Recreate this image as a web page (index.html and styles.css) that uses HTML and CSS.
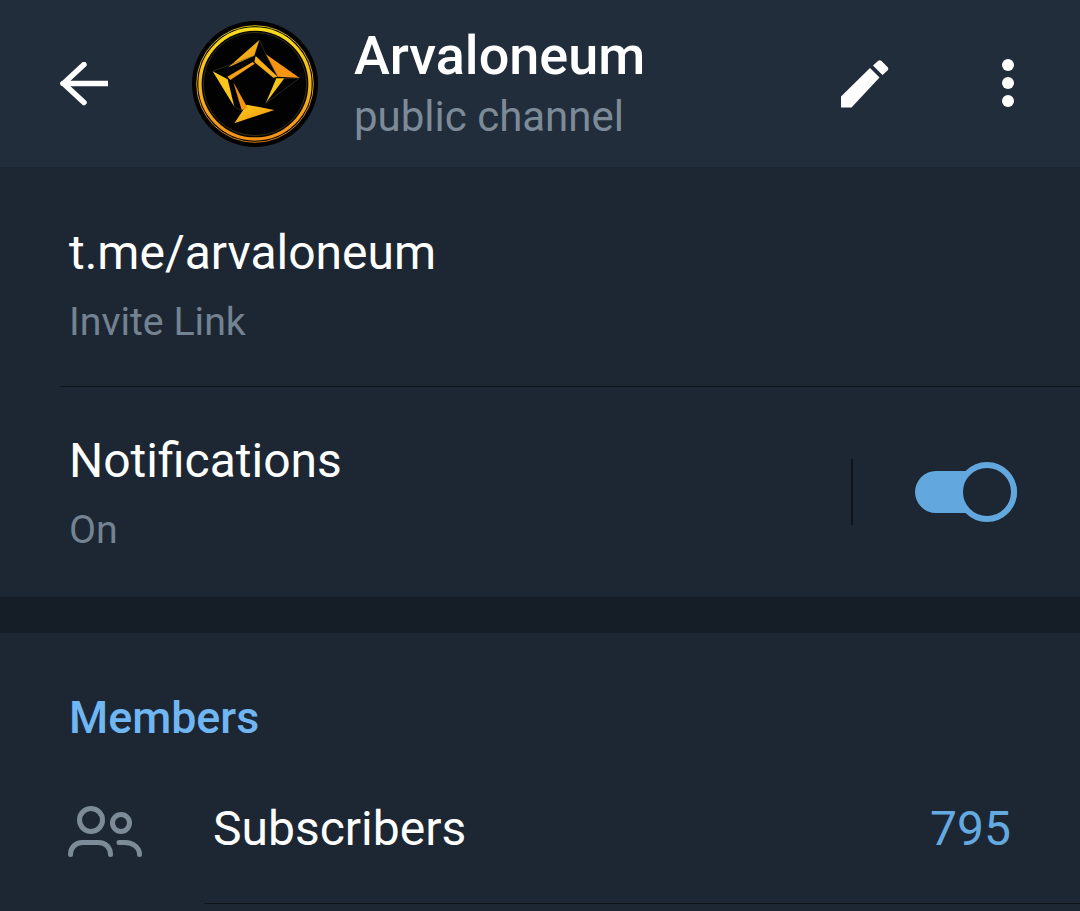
FILE: index.html
```html
<!DOCTYPE html>
<html lang="en">
<head>
    <meta charset="UTF-8">
    <title>Arvaloneum</title>
    <link rel="stylesheet" href="styles.css">
</head>
<body>
    <!-- Header -->
    <header class="header">
        <svg class="back-icon" viewBox="0 0 48 44" width="48" height="44">
            <path d="M3 21.500H47M24 2.500L3.500 21.500 24 40.500" fill="none" stroke="#fff" stroke-width="5.500" stroke-linecap="round"/>
        </svg>
        <svg class="logo" viewBox="-39 -39 378 378" width="126" height="126">
            <defs>
                <linearGradient id="ring" x1="0" y1="0" x2="0" y2="1">
                    <stop offset="0" stop-color="#f8dc1e"/>
                    <stop offset="1" stop-color="#f39016"/>
                </linearGradient>
                <linearGradient id="shard" x1="0" y1="0" x2="1" y2="1">
                    <stop offset="0" stop-color="#fbd01a"/>
                    <stop offset="1" stop-color="#f28d12"/>
                </linearGradient>
            </defs>
            <circle cx="150" cy="150" r="189" fill="#020202"/>
            <circle cx="150" cy="150" r="165" fill="none" stroke="url(#ring)" stroke-width="10"/>
            <circle cx="150" cy="150" r="175" fill="none" stroke="url(#ring)" stroke-width="2.500"/>
            <circle cx="150" cy="150" r="155" fill="none" stroke="#6b5a20" stroke-width="1.500"/>
            <path d="M163 18L148 65L70 100Z" fill="url(#shard)"/>
            <path d="M143 84L67 128L76 138L149 89Z" fill="#f6a014"/>
            <path d="M152 66L218 128L205 131L148 84Z" fill="#f7b016"/>
            <path d="M182 60L284 132L218 128Z" fill="#f59412"/>
            <path d="M214 133L238 133L182 208Z" fill="#f9c418"/>
            <path d="M125 212L208 228L88 268Z" fill="url(#shard)"/>
            <path d="M23 112L68 136L88 218Z" fill="#fac61a"/>
            <path d="M85 145L128 222L110 228Z" fill="#f29412"/>
            <path d="M163 18L182 60L218 128M23 112L148 65M238 133L284 132L182 208M88 218L110 230" fill="none" stroke="#4a4a3a" stroke-width="1.500"/>
        </svg>
        <div class="header-text">
            <div class="title">Arvaloneum</div>
            <div class="subtitle">public channel</div>
        </div>
        <svg class="edit-icon" viewBox="0 0 48 48" width="48" height="48">
            <path d="M0 47.500V36.500L29 8l9.500 9.500L10.500 47.500Z" fill="#fff"/>
            <path d="M32 5.500L37 1c1-1 2.500-1 3.500 0L46.500 7c1 1 1 2.500 0 3.500L41.500 15Z" fill="#fff"/>
        </svg>
        <div class="dots">
            <span></span><span></span><span></span>
        </div>
    </header>

    <!-- Info -->
    <section class="info">
        <div class="row-link">
            <div class="primary">t.me/arvaloneum</div>
            <div class="secondary">Invite Link</div>
        </div>
        <div class="row-notify">
            <div class="notify-text">
                <div class="primary">Notifications</div>
                <div class="secondary">On</div>
            </div>
            <div class="vline"></div>
            <div class="switch"><div class="knob"></div></div>
        </div>
    </section>

    <div class="gap"></div>

    <!-- Members -->
    <section class="members">
        <h2 class="section-title">Members</h2>
        <div class="member-row">
            <svg class="people-icon" viewBox="0 0 74 52" width="74" height="52">
                <g fill="none" stroke="#7d8b99" stroke-width="5" stroke-linecap="round">
                    <circle cx="23" cy="15" r="11.500"/>
                    <circle cx="53" cy="18" r="8.500"/>
                    <path d="M2.500 49.500c0-7 5-12 12-12h16c7 0 12 5 12 12"/>
                    <path d="M51 37.500h6c8 0 14.500 5 14.500 12"/>
                </g>
            </svg>
            <div class="member-body">
                <span class="member-label">Subscribers</span>
                <span class="member-count">795</span>
            </div>
        </div>
    </section>
</body>
</html>
```

FILE: styles.css
```css
body {
    margin: 0;
    height: 911px;
    overflow: hidden;
    background-color: #1d2733;
    font-family: Roboto, "Liberation Sans", sans-serif;
    color: #fff;
}

.header {
    display: flex;
    align-items: center;
    height: 167px;
    box-sizing: border-box;
    background-color: #212d3b;
}

.back-icon {
    margin-left: 60px;
    flex-shrink: 0;
}

.logo {
    margin-left: 84px;
    flex-shrink: 0;
}

.header-text {
    margin-left: 36px;
    flex-grow: 1;
}

.title {
    font-size: 54px;
    font-weight: 500;
    line-height: 58px;
    margin-top: 1px;
}

.subtitle {
    font-size: 42px;
    line-height: 48px;
    margin-top: 8px;
    color: #7d8b99;
}

.edit-icon {
    flex-shrink: 0;
    margin-top: 1px;
}

.dots {
    display: flex;
    flex-direction: column;
    gap: 6px;
    margin-top: -2px;
    margin-left: 113px;
    margin-right: 66px;
}

.dots span {
    width: 12px;
    height: 12px;
    border-radius: 50%;
    background-color: #fff;
}

.info {
    height: 430px;
}

.row-link {
    height: 220px;
    box-sizing: border-box;
    padding: 57px 0 0 69px;
    position: relative;
}

.row-link::after {
    content: "";
    position: absolute;
    left: 60px;
    right: 0;
    bottom: 0;
    height: 1px;
    background-color: #0f141a;
}

.primary {
    font-size: 48px;
    line-height: 58px;
}

.secondary {
    font-size: 39.300px;
    line-height: 44px;
    margin-top: 18px;
    color: #748391;
}

.row-notify {
    display: flex;
    align-items: center;
    height: 210px;
    box-sizing: border-box;
    padding-left: 69px;
}

.notify-text {
    flex-grow: 1;
}

.vline {
    width: 2px;
    height: 66px;
    background-color: #0f141a;
}

.switch {
    position: relative;
    width: 102px;
    height: 42px;
    margin: 0 63px 0 62px;
    border-radius: 21px;
    background-color: #62a8de;
}

.knob {
    position: absolute;
    right: 0;
    top: -9px;
    width: 48px;
    height: 48px;
    border: 6px solid #62a8de;
    border-radius: 50%;
    background-color: #1d2733;
}

.gap {
    height: 36px;
    background-color: #151d26;
}

.members {
    height: 278px;
}

.section-title {
    margin: 0;
    padding: 60px 0 0 69px;
    font-size: 44.800px;
    font-weight: 500;
    line-height: 50px;
    color: #6fb6f3;
}

.member-row {
    display: flex;
    align-items: flex-start;
    margin-top: 20px;
}

.people-icon {
    margin: 42px 0 0 68px;
    flex-shrink: 0;
}

.member-body {
    display: flex;
    justify-content: space-between;
    align-items: center;
    flex-grow: 1;
    height: 141px;
    box-sizing: border-box;
    margin-left: 62px;
    padding: 0 69px 10px 9px;
    border-bottom: 1px solid #0f141a;
    font-size: 48px;
}

.member-count {
    color: #64a9e0;
}
```
